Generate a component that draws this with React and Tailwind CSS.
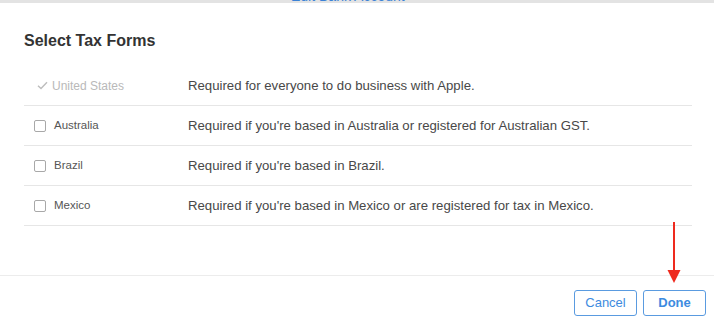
import React from "react";

const rows = [
  { country: "United States", note: "Required for everyone to do business with Apple.", locked: true },
  { country: "Australia", note: "Required if you're based in Australia or registered for Australian GST." },
  { country: "Brazil", note: "Required if you're based in Brazil." },
  { country: "Mexico", note: "Required if you're based in Mexico or are registered for tax in Mexico." },
];

const App = () => {
  return (
    <div className="relative w-[714px] h-[329px] overflow-hidden bg-white font-['Liberation_Sans',Arial,sans-serif]">
      {/* page behind the sheet, only the edge shows */}
      <div className="h-[3px] overflow-hidden bg-[#e3e3e3]">
        <div className="ml-[291px] -mt-[11px] text-[14px] leading-[14px] text-[#3b82d6]">Edit Bank Account</div>
      </div>

      <div className="pl-6 pr-[22px]">
        <h2 className="mt-[28px] text-[16px] leading-[20px] font-bold text-[#333]">Select Tax Forms</h2>

        <div className="mt-[15px]">
          {rows.map((row) => (
            <div key={row.country} className="flex items-center h-10 border-b border-[#e6e6e6]">
              <div className="w-[164px] flex items-center">
                {row.locked ? (
                  <>
                    <svg width="11" height="9" viewBox="0 0 11 9" className="ml-[13px] mr-[4px]">
                      <path d="M1 4.8 L4 7.6 L10 1.2" fill="none" stroke="#bdbdbd" strokeWidth="1.4" />
                    </svg>
                    <span className="text-[12px] text-[#b9b9b9]">{row.country}</span>
                  </>
                ) : (
                  <>
                    <span className="ml-[10px] mr-[8px] w-[12px] h-[12px] rounded-[2px] border border-[#a8a8a8] bg-white" />
                    <span className="text-[11.5px] text-[#555]">{row.country}</span>
                  </>
                )}
              </div>
              <div className="text-[13.2px] text-[#484848]">{row.note}</div>
            </div>
          ))}
        </div>
      </div>

      <div className="mt-[49px] border-t border-[#ececec] flex justify-end gap-[6px] pr-[8px] pt-[14px]">
        <button className="w-[63px] h-[26px] rounded-[3px] border border-[#5a9be0] text-[13px] text-[#3d8be0]">Cancel</button>
        <button className="w-[63px] h-[26px] rounded-[3px] border border-[#5a9be0] text-[13px] font-bold text-[#3d8be0]">Done</button>
      </div>

      {/* annotation arrow */}
      <svg width="16" height="62" viewBox="0 0 16 62" className="absolute left-[666px] top-[222px]">
        <line x1="8" y1="0" x2="8" y2="50" stroke="#ee2a1e" strokeWidth="2" />
        <path d="M1.5 48 L14.5 48 L8 61 Z" fill="#ee2a1e" />
      </svg>
    </div>
  );
};

export default App;
